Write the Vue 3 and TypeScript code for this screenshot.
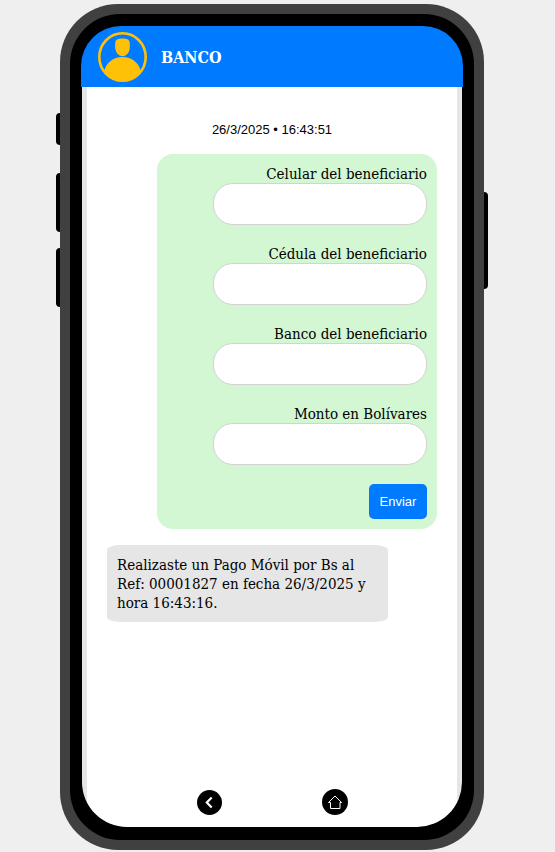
<script setup lang="ts">
import { reactive } from 'vue'

interface Field {
  id: 'celular' | 'cedula' | 'banco' | 'monto'
  label: string
}

const fields: Field[] = [
  { id: 'celular', label: 'Celular del beneficiario' },
  { id: 'cedula', label: 'Cédula del beneficiario' },
  { id: 'banco', label: 'Banco del beneficiario' },
  { id: 'monto', label: 'Monto en Bolívares' },
]

const form = reactive<Record<Field['id'], string>>({
  celular: '',
  cedula: '',
  banco: '',
  monto: '',
})
</script>

<template>
  <div class="page">
    <div class="phone">
      <span class="key key-mute"></span>
      <span class="key key-up"></span>
      <span class="key key-down"></span>
      <span class="key key-power"></span>
      <div class="bezel">
        <div class="screen">
          <header class="bar">
            <svg class="avatar" viewBox="0 0 49 50" aria-hidden="true">
              <ellipse cx="24.5" cy="25" rx="23.2" ry="23.7" fill="none" stroke="#ffc107" stroke-width="2.600" />
              <path
                d="M24.500 6.500c4.500 0 7.300 1.200 7.300 5v3.500c0 5-3 9.200-7.300 9.200s-7.300-4.200-7.300-9.200V11.500c0-3.800 2.800-5 7.300-5z"
                fill="#ffc107"
              />
              <path d="M6.500 38.500C8 31 15 25 24.500 25S41 31 42.500 38.500L44.500 36C41 44.500 33.500 49 24.500 49S8 44.500 4.500 36z" fill="#ffc107" />
            </svg>
            <h1 class="title">BANCO</h1>
          </header>
          <main class="chat">
            <p class="stamp">26/3/2025 • 16:43:51</p>
            <form class="transfer" @submit.prevent>
              <div v-for="field in fields" :key="field.id" class="field">
                <label :for="field.id">{{ field.label }}</label>
                <input :id="field.id" v-model="form[field.id]" type="text" />
              </div>
              <button class="send" type="submit">Enviar</button>
            </form>
            <p class="reply">Realizaste un Pago Móvil por Bs al Ref: 00001827 en fecha 26/3/2025 y hora 16:43:16.</p>
            <nav class="nav">
              <button class="round" type="button" aria-label="Volver">
                <svg viewBox="0 0 26 26">
                  <circle cx="12.500" cy="13.500" r="12.500" />
                  <path d="M14.700 8.500L9.800 13.500l4.900 5" fill="none" stroke="#fff" stroke-width="2.200" />
                </svg>
              </button>
              <button class="round" type="button" aria-label="Inicio">
                <svg viewBox="0 0 26 26">
                  <circle cx="13" cy="13" r="13" />
                  <path
                    d="M6.500 13.500L13 7l6.500 6.500h-1.500v6H8.500v-6z"
                    fill="none"
                    stroke="#fff"
                    stroke-width="1"
                  />
                </svg>
              </button>
            </nav>
          </main>
        </div>
      </div>
    </div>
  </div>
</template>

<style>
body {
  margin: 0;
  background: #efefef;
}
</style>

<style scoped>
.page {
  box-sizing: border-box;
  display: flex;
  min-height: 100vh;
  padding: 4px 71px 2px 60px;
  font-family: 'DejaVu Serif Condensed', 'DejaVu Serif', serif;
  font-size: 15px;
  line-height: 19px;
  color: #000;
}

.phone {
  position: relative;
  display: flex;
  flex: 1;
  padding: 10px;
  border-radius: 58px;
  background: #404040;
}

.key {
  position: absolute;
  left: -4px;
  width: 4px;
  border-radius: 4px 0 0 4px;
  background: #000;
}

.key-mute {
  top: 109px;
  height: 32px;
}

.key-up {
  top: 169px;
  height: 59px;
}

.key-down {
  top: 244px;
  height: 59px;
}

.key-power {
  top: 188px;
  right: -4px;
  left: auto;
  height: 97px;
  border-radius: 0 4px 4px 0;
}

.bezel {
  display: flex;
  flex: 1;
  padding: 12px 11px 13px;
  border-radius: 50px;
  background: #000;
}

.screen {
  display: flex;
  flex: 1;
  flex-direction: column;
}

.bar {
  display: flex;
  align-items: center;
  gap: 14px;
  height: 61px;
  padding: 0 17px;
  border-radius: 40px 40px 0 0;
  background: #007bff;
}

.avatar {
  width: 49px;
  height: 50px;
}

.title {
  margin: 0;
  padding-top: 2px;
  font-size: 16px;
  font-weight: 700;
  color: #fff;
}

.chat {
  display: flex;
  flex: 1;
  flex-direction: column;
  margin: 0 1px;
  padding: 33px 25px 12px;
  border-radius: 0 0 45px 45px;
  background: linear-gradient(to right, #e6e6e6 5px, #fff 5px, #fff calc(100% - 5px), #e6e6e6 calc(100% - 5px));
}

.stamp {
  margin: 0 0 15px;
  font-family: 'Liberation Sans', Arial, sans-serif;
  font-size: 13px;
  text-align: center;
}

.transfer {
  box-sizing: border-box;
  display: flex;
  flex-direction: column;
  align-items: flex-end;
  align-self: flex-end;
  width: 280px;
  max-width: 100%;
  padding: 10px;
  border-radius: 16px;
  background: #d3f6d3;
}

.field {
  display: flex;
  flex-direction: column;
  align-items: flex-end;
  margin-bottom: 19px;
}

.field label {
  height: 19px;
  line-height: 21px;
}

.field input {
  box-sizing: border-box;
  width: 214px;
  max-width: 100%;
  height: 42px;
  padding: 10px;
  border: 1px solid #d3d3d3;
  border-radius: 20px;
  background: #fff;
  font: inherit;
}

.send {
  min-width: 58px;
  height: 35px;
  padding: 0 10px;
  border: 0;
  border-radius: 5px;
  background: #007bff;
  font-family: 'Liberation Sans', Arial, sans-serif;
  font-size: 13px;
  color: #fff;
}

.reply {
  box-sizing: border-box;
  width: 281px;
  max-width: 100%;
  margin: 16px 0;
  padding: 11px 10px 9px;
  border-radius: 14px / 5px;
  background: #e6e6e6;
}

.nav {
  display: flex;
  justify-content: center;
  gap: 99px;
  margin-top: auto;
}

.round {
  display: flex;
  width: 26px;
  height: 26px;
  padding: 0;
  border: 0;
  border-radius: 50%;
  background: none;
}

.round svg {
  width: 26px;
  height: 26px;
}
</style>
